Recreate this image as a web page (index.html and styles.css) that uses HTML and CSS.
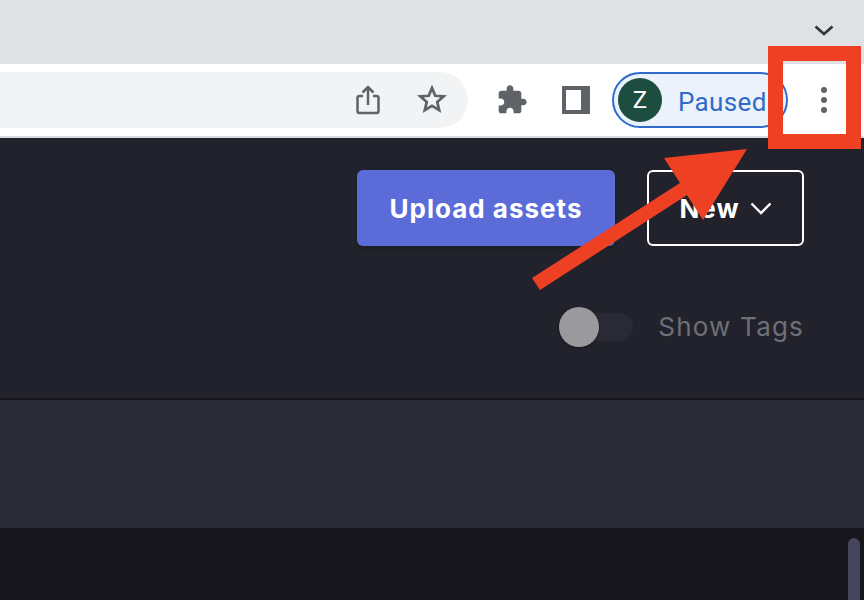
FILE: index.html
```html
<!DOCTYPE html>
<html lang="en">
<head>
    <meta charset="UTF-8">
    <meta name="viewport" content="width=device-width, initial-scale=1.0">
    <title>Assets</title>
    <link rel="stylesheet" href="styles.css">
</head>
<body>
    <div class="tabstrip">
        <svg class="tab-chevron" width="20" height="11" viewBox="0 0 20 11"><path d="M1.500 1.500L10 9l8.500-7.500" fill="none" stroke="#333639" stroke-width="2.800"/></svg>
    </div>

    <div class="toolbar">
        <div class="omnibox">
            <svg class="omni-icon share" width="24" height="30" viewBox="0 0 24 30"><path d="M7 11H3.500C2.100 11 1.500 11.800 1.500 13v13c0 1.200.6 2 2 2h17c1.400 0 2-.8 2-2V13c0-1.200-.6-2-2-2H17M12 20V2.500M6.500 7.500L12 2l5.500 5.500" fill="none" stroke="#5f6368" stroke-width="2.500"/></svg>
            <svg class="omni-icon star" width="32" height="30" viewBox="0 0 24 24"><path d="M12 3.200l2.600 6.200 6.700.55-5.100 4.400 1.550 6.550L12 17.400l-5.750 3.500 1.550-6.550-5.100-4.400 6.700-.55z" fill="none" stroke="#5f6368" stroke-width="2.200"/></svg>
        </div>
        <svg class="puzzle" width="32" height="32" viewBox="0 0 24 24"><path fill="#5f6368" d="M20.500 11H19V7c0-1.100-.9-2-2-2h-4V3.500C13 2.120 11.880 1 10.500 1S8 2.120 8 3.500V5H4c-1.100 0-1.990.9-1.990 2v3.800H3.500c1.490 0 2.700 1.210 2.700 2.700s-1.210 2.700-2.700 2.700H2V20c0 1.100.9 2 2 2h3.800v-1.500c0-1.490 1.210-2.700 2.700-2.700 1.490 0 2.700 1.210 2.700 2.700V22H17c1.100 0 2-.9 2-2v-4h1.500c1.380 0 2.500-1.120 2.500-2.500S21.880 11 20.500 11z"/></svg>
        <div class="sidepanel"><span></span></div>
        <div class="profile">
            <span class="avatar">Z</span>
            <span class="profile-label">Paused</span>
        </div>
        <div class="kebab"><i></i><i></i><i></i></div>
    </div>

    <div class="header">
        <div class="actions">
            <button class="btn-upload">Upload assets</button>
            <button class="btn-new">New
                <svg width="22" height="13" viewBox="0 0 22 13"><path d="M1.500 1.500L11 11l9.500-9.500" fill="none" stroke="#fff" stroke-width="2.400"/></svg>
            </button>
        </div>
        <div class="tags-row">
            <span class="switch"><span class="knob"></span></span>
            <span class="tags-label">Show Tags</span>
        </div>
    </div>

    <div class="band"></div>

    <div class="bottom">
        <div class="scroll-thumb"></div>
    </div>

    <!-- annotation over the screenshot -->
    <div class="mark-box"></div>
    <svg class="mark-arrow" width="864" height="600" viewBox="0 0 864 600">
        <polygon fill="#ee4023" points="532,278 680,183 664,158 747,149 703,220 687,195 540,290"/>
    </svg>
</body>
</html>
```

FILE: styles.css
```css
* {
    margin: 0;
    padding: 0;
    box-sizing: border-box;
}

html, body {
    height: 600px;
    overflow: hidden;
}

body {
    background-color: #17161c;
    font-family: 'Inter', 'Liberation Sans', sans-serif;
    position: relative;
}

.tabstrip {
    height: 64px;
    background-color: #dfe1e5;
    display: flex;
    justify-content: flex-end;
    padding: 25px 30px 0 0;
}

.tab-chevron {
    display: block;
}

.toolbar {
    height: 74px;
    background-color: #fff;
    border-bottom: 2px solid #dadce0;
    display: flex;
    align-items: flex-start;
    padding-top: 8px;
}

.omnibox {
    width: 468px;
    height: 56px;
    background-color: #f1f3f4;
    border-radius: 0 28px 28px 0;
    display: flex;
    align-items: center;
    padding-left: 356px;
}

.omni-icon.star {
    margin-left: 36px;
}

.share {
    margin-top: 0;
}

.star {
    margin-top: -2px;
}

.puzzle {
    margin: 12px 0 0 28px;
}

.sidepanel {
    width: 28px;
    height: 28px;
    margin: 14px 0 0 34px;
    background-color: #5f6368;
    padding: 4px 9px 4px 4px;
}

.sidepanel span {
    display: block;
    height: 100%;
    background-color: #fff;
}

.profile {
    width: 176px;
    height: 56px;
    margin-left: 22px;
    border: 2px solid #2f6bcb;
    border-radius: 28px;
    background-color: #ecf2fb;
    display: flex;
    align-items: center;
    padding-left: 4px;
}

.avatar {
    width: 44px;
    height: 44px;
    border-radius: 50%;
    background-color: #1c4d3f;
    color: #fff;
    font: 24px 'Roboto', sans-serif;
    display: flex;
    align-items: center;
    justify-content: center;
}

.profile-label {
    margin: 3px 0 0 16px;
    color: #2f6bcb;
    font: 26px 'Roboto', sans-serif;
    letter-spacing: 0.35px;
}

.kebab {
    margin: 15px 0 0 33px;
    width: 6px;
    display: flex;
    flex-direction: column;
    gap: 4px;
}

.kebab i {
    display: block;
    width: 6px;
    height: 6px;
    border-radius: 50%;
    background-color: #5f6368;
}

.header {
    height: 262px;
    background-color: #22222c;
    border-bottom: 2px solid #17161c;
    padding: 32px 60px 0 0;
}

.actions {
    display: flex;
    justify-content: flex-end;
    gap: 32px;
}

.btn-upload {
    width: 258px;
    height: 76px;
    background-color: #5b6cd8;
    color: #fff;
    border: none;
    border-radius: 6px;
    font: 700 26px 'Inter', sans-serif;
    letter-spacing: 1px;
    box-shadow: 0 2px 4px rgba(0,0,0,0.2);
}

.btn-new {
    width: 157px;
    height: 76px;
    background-color: transparent;
    color: #fff;
    border: 2px solid #fff;
    border-radius: 6px;
    font: 700 26px 'Inter', sans-serif;
    letter-spacing: 1px;
    display: flex;
    align-items: center;
    justify-content: center;
    gap: 10px;
}

.tags-row {
    display: flex;
    justify-content: flex-end;
    align-items: center;
    gap: 25px;
    margin-top: 65px;
}

.switch {
    width: 74px;
    height: 28px;
    background-color: #2a2a35;
    border-radius: 14px;
    position: relative;
}

.knob {
    position: absolute;
    left: 0;
    top: -6px;
    width: 40px;
    height: 40px;
    border-radius: 50%;
    background-color: #9a9a9c;
    box-shadow: 0 1px 3px rgba(0,0,0,0.4);
}

.tags-label {
    color: #6f6f76;
    font: 26px 'Inter', sans-serif;
    letter-spacing: 1.2px;
}

.band {
    height: 128px;
    background-color: #2a2a35;
}

.bottom {
    height: 72px;
    background-color: #17161c;
    display: flex;
    justify-content: flex-end;
    padding: 10px 4px 0 0;
}

.scroll-thumb {
    width: 12px;
    height: 80px;
    background-color: #44445a;
    border-radius: 6px;
}

.mark-box {
    position: absolute;
    left: 768px;
    top: 46px;
    width: 93px;
    height: 103px;
    border: 15px solid #ee4023;
}

.mark-arrow {
    position: absolute;
    left: 0;
    top: 0;
}
```
